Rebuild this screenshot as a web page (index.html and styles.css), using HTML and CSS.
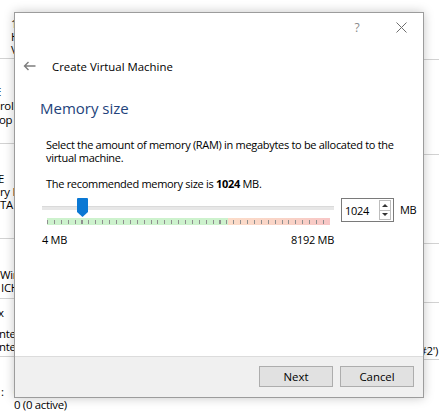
FILE: index.html
```html
<!DOCTYPE html>
<html lang="en">
<head>
    <meta charset="UTF-8">
    <meta name="viewport" content="width=device-width, initial-scale=1.0">
    <title>Create Virtual Machine</title>
    <link rel="stylesheet" href="styles.css">
</head>
<body>
    <div class="desktop">
        <!-- details pane of the manager window, behind the dialog -->
        <div class="pane pane-left">
            <div class="group g1">
                <div class="row ind-11">1</div>
                <div class="row ind-11">H</div>
                <div class="row ind-11">V</div>
            </div>
            <div class="group g2">
                <div class="row row-14 cut-5">E</div>
                <div class="row row-14">rolle</div>
                <div class="row row-14 cut-1">op S</div>
            </div>
            <div class="group g3">
                <div class="row cut-2">E</div>
                <div class="row">ry M</div>
                <div class="row">TA</div>
            </div>
            <div class="group g4">
                <div class="row">Wir</div>
                <div class="row ind-1">ICH</div>
            </div>
            <div class="group g5">
                <div class="row cut-2">x</div>
                <div class="row gap-8 cut-1">ntel</div>
                <div class="row cut-1">ntel</div>
            </div>
            <div class="group g6">
                <div class="row"><span class="lbl">:</span><span class="val">OHCI</span></div>
                <div class="row ind-14">0 (0 active)</div>
            </div>
        </div>
        <div class="pane-fill"></div>
        <div class="pane pane-right">
            <div class="group r1"></div>
            <div class="group r2"></div>
            <div class="group r3"></div>
            <div class="group r4"></div>
            <div class="group r5">
                <div class="row row-end">#2')</div>
            </div>
        </div>

        <div class="dialog">
            <div class="titlebar">
                <span class="caption-btn help">?</span>
                <span class="caption-btn">
                    <svg width="11" height="11" viewBox="0 0 11 11"><path d="M0.5 0.5 L10.5 10.5 M10.5 0.5 L0.5 10.5" stroke="#6e6e6e" stroke-width="1" fill="none"/></svg>
                </span>
            </div>
            <div class="wizard-header">
                <svg class="back" width="13" height="10" viewBox="0 0 13 10"><path d="M12.5 5 H1.5 M5.5 1 L1.5 5 L5.5 9" fill="none" stroke="#7d7d7d" stroke-width="1.4"/></svg>
                <span class="wizard-title">Create Virtual Machine</span>
            </div>
            <div class="page">
                <h2 class="page-title">Memory size</h2>
                <p class="page-text">Select the amount of memory (RAM) in megabytes to be allocated to the virtual machine.</p>
                <p class="page-text">The recommended memory size is <b>1024</b> MB.</p>
                <div class="memory-row">
                    <div class="slider">
                        <div class="groove"></div>
                        <div class="band"></div>
                        <div class="scale"><span>4 MB</span><span>8192 MB</span></div>
                        <svg class="thumb" width="11" height="19" viewBox="0 0 11 19"><path d="M0 1 Q0 0 1 0 H10 Q11 0 11 1 V14 L5.5 19 L0 14 Z" fill="#0a78d4"/></svg>
                    </div>
                    <div class="spin">
                        <span class="spin-value">1024</span>
                        <span class="spin-buttons">
                            <span class="spin-half"><span class="arrow-up"></span></span>
                            <span class="spin-half"><span class="arrow-down"></span></span>
                        </span>
                    </div>
                    <span class="unit">MB</span>
                </div>
            </div>
            <div class="footer">
                <button class="btn">Next</button>
                <button class="btn">Cancel</button>
            </div>
        </div>
    </div>
</body>
</html>
```

FILE: styles.css
```css
body {
    margin: 0;
    background-color: #fff;
    font-family: "Open Sans", "Noto Sans", sans-serif;
    font-size: 11px;
    letter-spacing: -0.3px;
    color: #000;
}

/* background window */
.desktop {
    position: relative;
    display: flex;
    height: 411px;
    overflow: hidden;
}
.pane {
    display: flex;
    flex-direction: column;
    flex-shrink: 0;
}
.pane-left {
    width: 14px;
    font-size: 11.4px;
}
.pane-fill {
    flex: 1;
}
.pane-right {
    width: 15px;
    font-size: 11.4px;
    overflow: hidden;
}
.group {
    box-sizing: border-box;
    border-bottom: 1px solid #d2d2d2;
    overflow: hidden;
}
.row {
    white-space: nowrap;
    line-height: 13px;
    height: 13px;
}
.row-14 { line-height: 14px; height: 14px; }
.ind-1 { padding-left: 1px; }
.ind-11 { padding-left: 11px; }
.ind-14 { padding-left: 14px; }
.cut-1 { margin-left: -1px; }
.cut-2 { margin-left: -2px; }
.cut-5 { margin-left: -5px; }
.gap-8 { margin-top: 8px; }
.lbl { margin-left: 1px; }
.val { margin-left: 10px; }
.row-end {
    display: flex;
    justify-content: flex-end;
    padding-right: 1px;
}

.g1 { height: 60px; padding-top: 17px; }
.g2 { height: 85px; padding-top: 26px; }
.g3 { height: 96px; padding-top: 28px; }
.g4 { height: 61px; padding-top: 29px; }
.g5 { height: 58px; padding-top: 6.5px; }
.g6 { flex: 1; padding-top: 28.5px; border-bottom: none; overflow: visible; }

.r1 { height: 60px; }
.r2 { height: 95px; }
.r3 { height: 89px; }
.r4 { height: 59px; }
.r5 { height: 57px; padding-top: 40.5px; }

/* wizard dialog */
.dialog {
    position: absolute;
    left: 14px;
    top: 12px;
    width: 408px;
    height: 384px;
    border: 1px solid #9c9c9c;
    background-color: #fff;
    box-shadow: 0 0 10px rgba(0,0,0,0.22);
    display: flex;
    flex-direction: column;
}
.titlebar {
    height: 29px;
    display: flex;
    justify-content: flex-end;
}
.caption-btn {
    width: 44px;
    display: flex;
    align-items: center;
    justify-content: center;
}
.help {
    color: #8a8a8a;
    font-size: 12px;
}
.wizard-header {
    margin-top: 12px;
    height: 24px;
    padding-left: 8px;
    display: flex;
    align-items: center;
}
.back {
    margin-right: 16px;
}
.wizard-title {
    font-size: 11.4px;
    letter-spacing: 0;
}
.page {
    padding: 0 0 0 25px;
}
.page-title {
    margin: 20px 0 0;
    font-size: 15px;
    line-height: 20px;
    font-weight: normal;
    letter-spacing: 0;
    color: #23437b;
}
.page-text {
    margin: 20px 0 0 6px;
    line-height: 13px;
}
.page-text + .page-text {
    margin-top: 13px;
}
.memory-row {
    margin: 8px 0 0 2px;
    display: flex;
    align-items: flex-start;
}
.slider {
    position: relative;
    flex-shrink: 0;
    width: 292px;
}
.groove {
    margin-top: 8px;
    height: 4px;
    background-color: #e7e7e7;
    border-top: 1px solid #dadada;
    box-sizing: border-box;
}
.band {
    margin: 8px 4px 0 5px;
    height: 7px;
    background:
        repeating-linear-gradient(to right, #8f8f8f 0 1px, transparent 1px 6.9px) 0 2px / 100% 4px no-repeat,
        linear-gradient(to right, #cdf2cd 0 64%, #fcdcc9 64%, #f9d2c6 86%, #f8c6c6 100%);
}
.scale {
    margin-top: 8px;
    line-height: 13px;
    display: flex;
    justify-content: space-between;
}
.thumb {
    position: absolute;
    left: 35px;
    top: 0;
}
.spin {
    flex-shrink: 0;
    margin-left: 7px;
    width: 53px;
    height: 24px;
    box-sizing: border-box;
    border: 1px solid #7a7a7a;
    display: flex;
    align-items: center;
    justify-content: space-between;
    padding: 0 2px 0 3px;
}
.spin-buttons {
    width: 12px;
    height: 20px;
    box-sizing: border-box;
    border: 1px solid #bdbdbd;
    display: flex;
    flex-direction: column;
}
.spin-half {
    flex: 1;
    display: flex;
    align-items: center;
    justify-content: center;
}
.spin-half + .spin-half {
    border-top: 1px solid #bdbdbd;
}
.arrow-up {
    border-left: 3px solid transparent;
    border-right: 3px solid transparent;
    border-bottom: 3px solid #333;
}
.arrow-down {
    border-left: 3px solid transparent;
    border-right: 3px solid transparent;
    border-top: 3px solid #333;
}
.unit {
    margin-left: 6px;
    line-height: 24px;
}
.footer {
    margin-top: auto;
    height: 41px;
    box-sizing: border-box;
    border-top: 1px solid #dcdcdc;
    background-color: #f0f0f0;
    padding: 9px 9px 0 0;
    display: flex;
    justify-content: flex-end;
    align-items: flex-start;
    gap: 7px;
}
.btn {
    width: 74px;
    height: 21px;
    padding: 0;
    border: 1px solid #adadad;
    background-color: #e1e1e1;
    font-family: inherit;
    font-size: 11.4px;
    letter-spacing: 0;
    color: #000;
}
```
